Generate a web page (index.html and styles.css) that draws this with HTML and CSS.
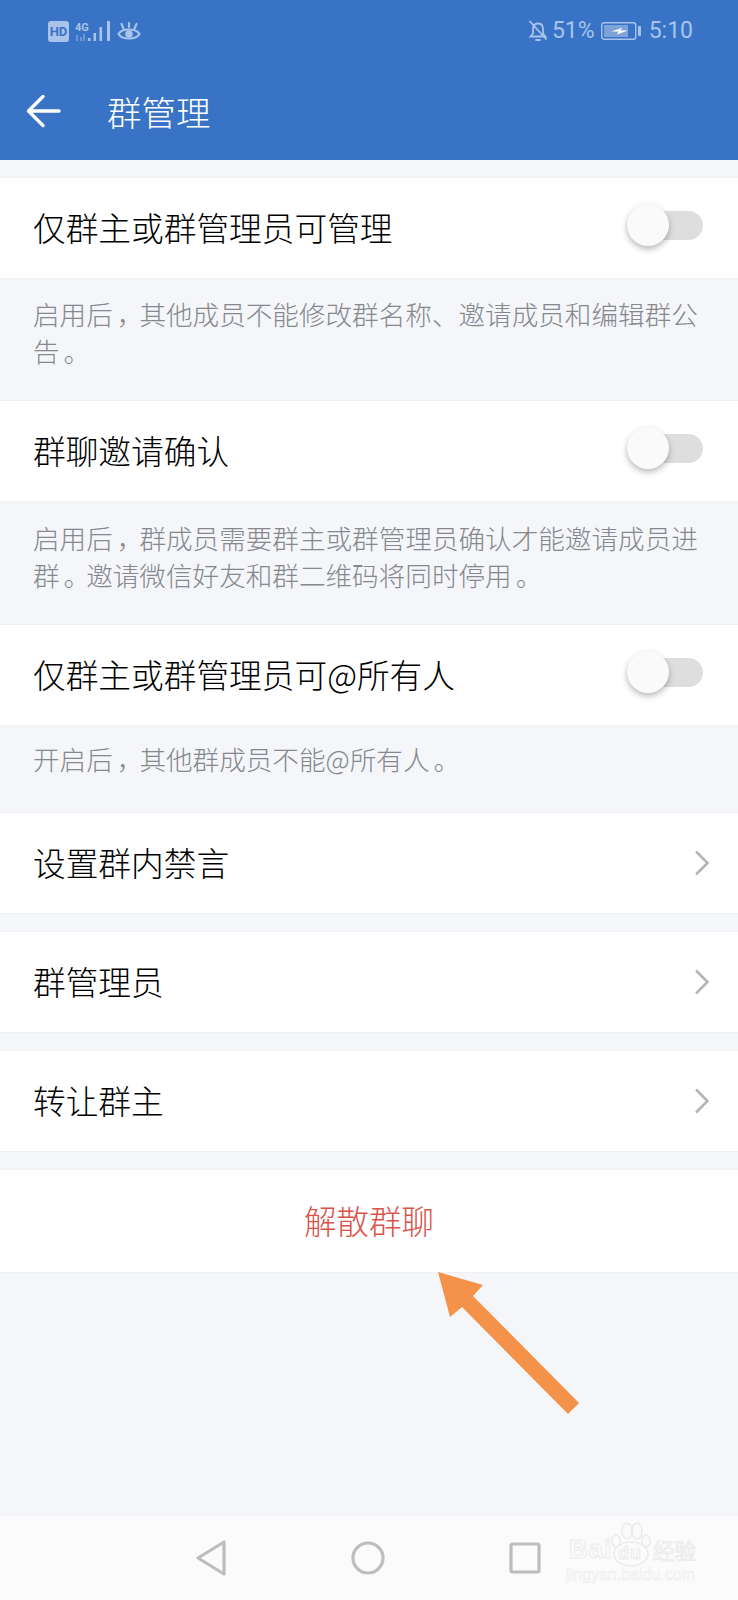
FILE: index.html
```html
<!DOCTYPE html>
<html lang="zh-CN">
<head>
<meta charset="utf-8">
<title>群管理</title>
<link rel="stylesheet" href="styles.css">
</head>
<body>
<div class="screen">
  <header class="appbar">
    <div class="status">
      <div class="status-left">
        <span class="hd">HD</span>
        <svg class="signal" width="36" height="22" viewBox="0 0 36 22">
          <text x="0" y="10.500" class="net">4G</text>
          <path d="M2 21v-6M6 21v-4M9 21v-7" class="net-dim"/>
          <path d="M13 18h2.500v3H13zM18.500 13h2.600v8h-2.600zM24.500 7h2.600v14h-2.600zM32 1h3v20h-3z" class="bars"/>
        </svg>
        <svg class="eye" width="24" height="22" viewBox="0 0 24 22">
          <path d="M1.500 14C5 8 19 8 22.500 14C19 20 5 20 1.500 14Z" class="line heavy"/>
          <circle cx="12" cy="14" r="3.800" class="dot"/>
          <path d="M4.500 4L6.500 8.500M12 3V7M19.500 4L17.500 8.500" class="line heavy"/>
        </svg>
      </div>
      <div class="status-right">
        <svg class="bell" width="20" height="22" viewBox="0 0 20 22">
          <path d="M2.500 16.500h15l-2.500-3V9C15 5.500 13 3.500 10 3.500S5 5.500 5 9v4.500Z M8 20h4 M2 1.500L18 19" class="line"/>
        </svg>
        <span class="stat-text">51%</span>
        <svg class="batt" width="40" height="20" viewBox="0 0 40 20">
          <rect x="0.750" y="1.750" width="34" height="16.500" rx="2.500" class="line thin"/>
          <rect x="3" y="4" width="24" height="12" class="charge"/>
          <path d="M10 10.500L21 7L19.500 9.500H27L16 13.500L17.500 10.500Z" class="flash"/>
          <rect x="37" y="5" width="3" height="10" rx="1" class="dot"/>
        </svg>
        <span class="stat-text clock">5:10</span>
      </div>
    </div>
    <div class="titlebar">
      <svg class="back" width="36" height="36" viewBox="0 0 36 36">
        <path d="M33 18H3M17 3.500L2.500 18L17 32.500" />
      </svg>
      <h1 class="title">群管理</h1>
    </div>
  </header>

  <main class="content">
    <div class="row">
      <span class="label">仅群主或群管理员可管理</span>
      <span class="switch"><span class="knob"></span></span>
    </div>
    <p class="hint two">
      <span class="ln">启用后<span class="pn">，</span>其他成员不能修改群名称、邀请成员和编辑群公</span>
      <span class="ln">告<span class="pn">。</span></span>
    </p>
    <div class="row">
      <span class="label">群聊邀请确认</span>
      <span class="switch"><span class="knob"></span></span>
    </div>
    <p class="hint two tall">
      <span class="ln">启用后<span class="pn">，</span>群成员需要群主或群管理员确认才能邀请成员进</span>
      <span class="ln">群<span class="pn">。</span>邀请微信好友和群二维码将同时停用<span class="pn">。</span></span>
    </p>
    <div class="row">
      <span class="label">仅群主或群管理员可@所有人</span>
      <span class="switch"><span class="knob"></span></span>
    </div>
    <p class="hint one">
      <span class="ln">开启后<span class="pn">，</span>其他群成员不能@所有人<span class="pn">。</span></span>
    </p>
    <div class="row">
      <span class="label">设置群内禁言</span>
      <svg class="chevron" width="16" height="26" viewBox="0 0 16 26"><path d="M2 1.500L13.500 13L2 24.500"/></svg>
    </div>
    <div class="row spaced">
      <span class="label">群管理员</span>
      <svg class="chevron" width="16" height="26" viewBox="0 0 16 26"><path d="M2 1.500L13.500 13L2 24.500"/></svg>
    </div>
    <div class="row spaced">
      <span class="label">转让群主</span>
      <svg class="chevron" width="16" height="26" viewBox="0 0 16 26"><path d="M2 1.500L13.500 13L2 24.500"/></svg>
    </div>
    <div class="row spaced danger">解散群聊</div>
  </main>

  <nav class="navbar">
    <svg width="32" height="36" viewBox="0 0 32 36"><path d="M29 2V34L3 18Z" class="nav-stroke"/></svg>
    <svg width="34" height="36" viewBox="0 0 34 36"><circle cx="17" cy="18" r="15" class="nav-stroke"/></svg>
    <svg width="32" height="32" viewBox="0 0 32 32"><rect x="2" y="2" width="28" height="28" rx="1.500" class="nav-stroke"/></svg>
  </nav>

  <svg class="pointer" width="160" height="160" viewBox="0 0 160 160">
    <path d="M2 2L47 15L37 26L143 133L132 144L26 37L14 47Z"/>
  </svg>

  <div class="mark">
    <div class="mark-top">
      <span class="mark-word">Bai</span>
      <svg class="paw" width="44" height="46" viewBox="0 0 44 46">
        <ellipse cx="18" cy="10" rx="5" ry="8"/>
        <ellipse cx="28" cy="10" rx="5" ry="8"/>
        <ellipse cx="7" cy="20" rx="4" ry="6"/>
        <ellipse cx="37" cy="20" rx="4" ry="6"/>
        <ellipse cx="22" cy="33" rx="17" ry="12"/>
      </svg>
      <span class="mark-du">du</span>
      <span class="mark-cn">经验</span>
    </div>
    <div class="mark-url">jingyan.baidu.com</div>
  </div>
</div>
</body>
</html>
```

FILE: styles.css
```css
* { box-sizing: border-box; }

html, body { margin: 0; padding: 0; }

body {
  font-family: "Noto Sans CJK SC", "Noto Sans", sans-serif;
  background: #f5f6fa;
}

.screen {
  position: relative;
  width: 738px;
  height: 1600px;
  display: flex;
  flex-direction: column;
  overflow: hidden;
  background: #f5f6fa;
}

/* top bar */
.appbar {
  flex: none;
  height: 160px;
  background: #3873c6;
  color: #fff;
}

.status {
  height: 62px;
  display: flex;
  justify-content: space-between;
  align-items: center;
  padding: 0 45px 0 48px;
}

.status-left, .status-right { display: flex; align-items: center; }

.status-left { gap: 6px; }

.status-right { gap: 6px; }

.bell { margin-right: -2px; }

.hd {
  width: 21px;
  height: 21px;
  border-radius: 3px;
  background: #a9c3ea;
  color: #3873c6;
  font: 700 13px/21px "Roboto", sans-serif;
  text-align: center;
}

.net { font: 700 11px "Roboto", sans-serif; fill: #a9c3ea; }
.net-dim { stroke: #6c96d6; stroke-width: 2; fill: none; }
.bars { fill: #a9c3ea; }

.line { fill: none; stroke: #a9c3ea; stroke-width: 1.800; stroke-linecap: round; }
.line.heavy { stroke-width: 2.200; }
.line.thin { stroke-width: 1.400; }
.dot { fill: #a9c3ea; }
.charge { fill: #7ea2da; }
.flash { fill: #fff; }

.stat-text {
  font: 400 23px/24px "Roboto", sans-serif;
  color: #a9c3ea;
}

.clock { margin-left: 2px; }

.titlebar {
  height: 98px;
  display: flex;
  align-items: center;
  padding: 0 0 0 26px;
}

.back { fill: none; stroke: #fff; stroke-width: 3.400; stroke-linecap: round; stroke-linejoin: round; }

.title {
  margin: 0 0 0 45px;
  font-size: 34.500px;
  font-weight: 300;
  line-height: 44px;
  color: #fff;
}

/* settings list */
.content { flex: 1; display: flex; flex-direction: column; padding-top: 17px; }

.row {
  flex: none;
  height: 102px;
  padding: 0 34px 2px 33px;
  display: flex;
  align-items: center;
  justify-content: space-between;
  background: #fff;
  border-top: 1px solid #f0f0f3;
  border-bottom: 1px solid #eeeff2;
}

.spaced { margin-top: 17px; }

.label {
  font-size: 32.700px;
  font-weight: 300;
  color: #000;
  line-height: 44px;
}

.danger {
  justify-content: center;
  height: 104px;
  padding: 0 0 4px;
  font-size: 32.500px;
  font-weight: 300;
  color: #d9534a;
}

.hint {
  margin: 0;
  padding: 0 34px 0 33px;
  font-size: 26.600px;
  font-weight: 300;
  color: #85888d;
  line-height: 36.500px;
}

.hint.two { height: 121px; padding-top: 17px; }
.hint.tall { height: 122px; padding-top: 18px; }
.hint.one { height: 86px; padding-top: 15px; }

.ln { display: block; white-space: nowrap; }

/* full-width marks sit a little further into their cell */
.pn { padding-left: 4px; letter-spacing: -4px; }

.switch {
  position: relative;
  width: 76px;
  height: 29px;
  margin: 0 1px 3px 0;
  border-radius: 15px;
  background: #dedede;
  flex: none;
}

.knob {
  position: absolute;
  left: 0;
  top: -7px;
  width: 42px;
  height: 42px;
  border-radius: 50%;
  background: #fafafa;
  box-shadow: 0 3px 6px rgba(0, 0, 0, .28);
}

.chevron { fill: none; stroke: #b5b5b5; stroke-width: 2.600; margin: 2px -6px 0 0; }

/* system navigation */
.navbar {
  flex: none;
  height: 84px;
  background: #fbfbfb;
  display: flex;
  align-items: center;
  padding: 0 0 0 195px;
  gap: 124px;
}

.nav-stroke { fill: none; stroke: #bdbdbd; stroke-width: 3.200; stroke-linejoin: round; }

.pointer {
  position: absolute;
  left: 436px;
  top: 1270px;
  fill: #f39248;
}

/* watermark */
.mark {
  position: absolute;
  left: 566px;
  top: 1519px;
  width: 134px;
  color: #fbfbfb;
  -webkit-text-stroke: 1px #ebebeb;
}

.mark-top { position: relative; height: 47px; font-family: "Liberation Sans", sans-serif; }

.mark-word {
  position: absolute;
  left: 3px;
  top: 15px;
  font-size: 26px;
  font-weight: 700;
  line-height: 30px;
  letter-spacing: 1px;
}

.paw {
  position: absolute;
  left: 43px;
  top: 2px;
  fill: #fbfbfb;
  stroke: #ebebeb;
  stroke-width: 1.500;
}

.mark-du {
  position: absolute;
  left: 52px;
  top: 24px;
  font-size: 18px;
  font-weight: 700;
  line-height: 20px;
  letter-spacing: 1px;
}

.mark-cn {
  position: absolute;
  left: 87px;
  top: 16px;
  font-family: "Noto Sans CJK SC", sans-serif;
  font-size: 21.500px;
  line-height: 30px;
}

.mark-url {
  font-family: "Liberation Sans", sans-serif;
  font-size: 16px;
  line-height: 18px;
  -webkit-text-stroke: .5px #ebebeb;
}
```
